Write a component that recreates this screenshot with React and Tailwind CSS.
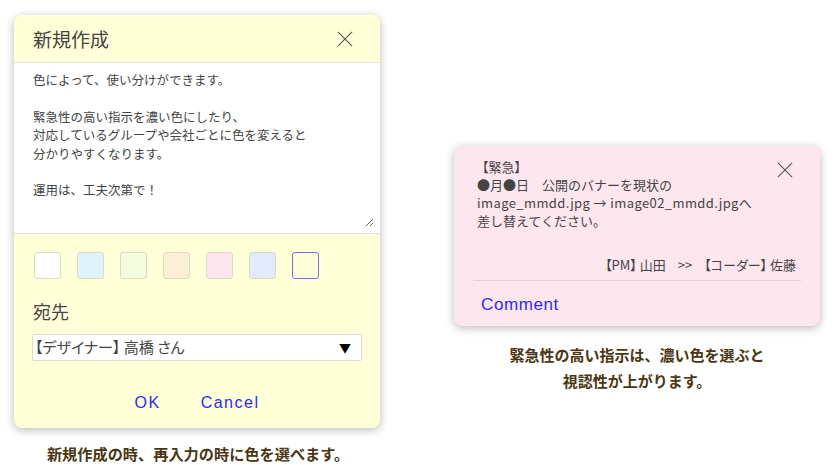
import { useState } from 'react'

const font = { fontFamily: '"Noto Sans CJK JP", "Noto Sans", sans-serif' }
const latin = { fontFamily: '"Liberation Sans", Arial, sans-serif' }
const palt = { fontFeatureSettings: '"palt"' }

const swatches = ['#ffffff', '#dff3fd', '#f3fcdc', '#fdefd6', '#fde6ee', '#e3eafd', 'transparent']

function CloseIcon({ size = 18 }) {
  return (
    <svg width={size} height={size} viewBox="0 0 18 18" fill="none" stroke="#555" strokeWidth="1.2">
      <path d="M1 1L17 17M17 1L1 17" />
    </svg>
  )
}

export default function App() {
  const [selected, setSelected] = useState(6)

  return (
    <div className="w-[834px] h-[465px] bg-white flex text-[#444]" style={font}>
      {/* left: new entry dialog */}
      <div className="w-[380px] pl-[14px] pt-[15px] flex flex-col">
        <div className="w-[366px] rounded-[8px] overflow-hidden bg-[#ffffd8] shadow-[0_2px_10px_rgba(0,0,0,0.28)]">
          <div className="h-[48px] flex items-center justify-between pl-[19px] pr-[27px] border-b border-[#e9e9cf]">
            <span className="text-[19px] leading-none">新規作成</span>
            <CloseIcon size={16} />
          </div>
          <div className="relative h-[171px] bg-white px-[19px] pt-[8px] text-[12.5px] leading-[18.4px] border-b border-[#e3e3e3]">
            <p>色によって、使い分けができます。</p>
            <p className="mt-[18.4px]">緊急性の高い指示を濃い色にしたり、</p>
            <p>対応しているグループや会社ごとに色を変えると</p>
            <p>分かりやすくなります。</p>
            <p className="mt-[18.4px]">運用は、工夫次第で！</p>
            <svg className="absolute right-[6px] bottom-[6px]" width="9" height="9" viewBox="0 0 9 9" stroke="#666" strokeWidth="1">
              <path d="M1 8L8 1M5 8L8 5" />
            </svg>
          </div>
          <div className="flex gap-[16px] pl-[20px] pt-[18px]">
            {swatches.map((c, i) => (
              <button
                key={i}
                onClick={() => setSelected(i)}
                className={`w-[27px] h-[27px] rounded-[3px] border ${selected === i ? 'border-[#7070ff] border-[1.5px]' : 'border-[#dcdcc0]'}`}
                style={{ background: c }}
              />
            ))}
          </div>
          <div className="pl-[19px] pt-[23px] text-[18px] leading-none">宛先</div>
          <div className="mx-[18px] mt-[14px] h-[27px] bg-white border border-[#dcdcd0] rounded-[2px] flex items-center justify-between pl-[2px] pr-[10px]">
            <span className="text-[15px]" style={palt}>【デザイナー】 高橋 さん</span>
            <span className="text-[12px] text-black">▼</span>
          </div>
          <div className="flex justify-center gap-[40px] pt-[30px] pb-[17px] text-[16px] tracking-[1.5px] text-[#2a2aff]" style={latin}>
            <button>OK</button>
            <button>Cancel</button>
          </div>
        </div>
        <p className="mt-[14px] w-[366px] pl-[2px] text-center text-[15.2px] font-bold text-[#4a3612]">
          新規作成の時、再入力の時に色を選べます。
        </p>
      </div>

      {/* right: urgent card */}
      <div className="pl-[74px] pt-[146px] flex flex-col">
        <div className="w-[366px] rounded-[8px] bg-[#fde6ee] shadow-[0_2px_10px_rgba(0,0,0,0.28)] pt-[12px] pb-[8px] px-[19px]">
          <div className="flex justify-between pl-[4px]">
            <div className="text-[13px] leading-[18px]">
              <p className="pl-[5px]" style={palt}>【緊急】</p>
              <p>●月●日　公開のバナーを現状の</p>
              <p className="tracking-[0.4px]">image_mmdd.jpg → image02_mmdd.jpgへ</p>
              <p>差し替えてください。</p>
            </div>
            <div className="pt-[4px] pr-[8px]">
              <CloseIcon size={16} />
            </div>
          </div>
          <div className="flex justify-end pr-[5px] mt-[26px] text-[13px] leading-[18px] gap-[12px]" style={palt}>
            <span>【PM】 山田</span>
            <span>&gt;&gt;</span>
            <span>【コーダー】 佐藤</span>
          </div>
          <div className="border-t border-[#dcd0d4] mt-[6px]" />
          <button className="mt-[11px] pl-[8px] text-[17px] tracking-[0.6px] text-[#2a2aff]" style={latin}>
            Comment
          </button>
        </div>
        <p className="mt-[16px] w-[366px] text-center text-[15px] font-bold leading-[26px] text-[#4a3612]">
          緊急性の高い指示は、濃い色を選ぶと<br />視認性が上がります。
        </p>
      </div>
    </div>
  )
}
